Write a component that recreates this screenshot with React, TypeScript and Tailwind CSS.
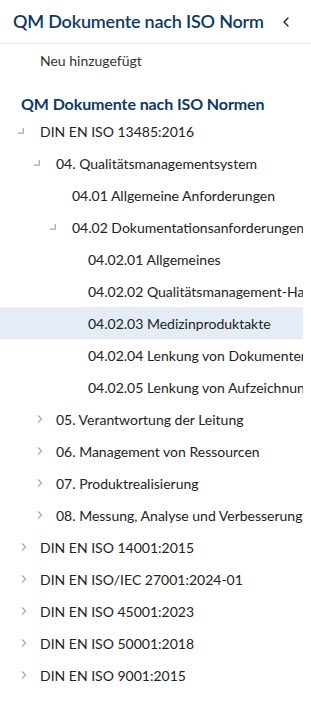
import { ChevronLeft } from "lucide-react";

type Node = {
  label: string;
  level: number;
  state?: "open" | "closed";
  selected?: boolean;
};

const nodes: Node[] = [
  { label: "DIN EN ISO 13485:2016", level: 0, state: "open" },
  { label: "04. Qualitätsmanagementsystem", level: 1, state: "open" },
  { label: "04.01 Allgemeine Anforderungen", level: 2 },
  { label: "04.02 Dokumentationsanforderungen", level: 2, state: "open" },
  { label: "04.02.01 Allgemeines", level: 3 },
  { label: "04.02.02 Qualitätsmanagement-Handbuch", level: 3 },
  { label: "04.02.03 Medizinproduktakte", level: 3, selected: true },
  { label: "04.02.04 Lenkung von Dokumenten", level: 3 },
  { label: "04.02.05 Lenkung von Aufzeichnungen", level: 3 },
  { label: "05. Verantwortung der Leitung", level: 1, state: "closed" },
  { label: "06. Management von Ressourcen", level: 1, state: "closed" },
  { label: "07. Produktrealisierung", level: 1, state: "closed" },
  { label: "08. Messung, Analyse und Verbesserung", level: 1, state: "closed" },
  { label: "DIN EN ISO 14001:2015", level: 0, state: "closed" },
  { label: "DIN EN ISO/IEC 27001:2024-01", level: 0, state: "closed" },
  { label: "DIN EN ISO 45001:2023", level: 0, state: "closed" },
  { label: "DIN EN ISO 50001:2018", level: 0, state: "closed" },
  { label: "DIN EN ISO 9001:2015", level: 0, state: "closed" },
];

const indent = ["pl-[16px]", "pl-[32px]", "pl-[48px]", "pl-[64px]"];

const Toggle = ({ state }: { state?: "open" | "closed" }) => {
  if (state === "open")
    return (
      <svg width="24" height="12" viewBox="0 0 24 12" className="shrink-0">
        <path d="M7.25 3 V8.25 H2" fill="none" stroke="#b8b8b8" strokeWidth="1.5" />
      </svg>
    );
  if (state === "closed")
    return (
      <svg width="24" height="12" viewBox="0 0 24 12" className="shrink-0">
        <path d="M6 2.5 L9.5 6 L6 9.5" fill="none" stroke="#b3b3b3" strokeWidth="1.5" />
      </svg>
    );
  return <span className="w-[24px] shrink-0" />;
};

export default function App() {
  return (
    <div className="w-[311px] h-[701px] bg-white overflow-hidden font-['Lato',sans-serif] text-[#222]">
      {/* Header */}
      <div className="h-[44px] flex items-center justify-between pl-[13px] pr-[17px] border-b border-[#e6e6e6]">
        <h1 className="text-[18px] font-semibold text-[#0e3a66] tracking-[-0.2px]">
          QM Dokumente nach ISO Norm
        </h1>
        <ChevronLeft className="w-[16px] h-[16px] text-[#222]" strokeWidth={2} />
      </div>

      <div className="pl-[40px] pt-[6px] h-[34px] text-[14px] text-[#333]">Neu hinzugefügt</div>

      <h2 className="pl-[21px] pt-[15px] leading-[22px] text-[16px] font-bold text-[#0e3a66] tracking-[-0.1px]">
        QM Dokumente nach ISO Normen
      </h2>

      {/* Tree */}
      <div className="w-[303px] overflow-hidden">
        {nodes.map((n) => (
          <div
            key={n.label}
            className={`h-[32px] flex items-center whitespace-nowrap text-[14px] ${indent[n.level]} ${
              n.selected ? "bg-[#e4ecf5]" : ""
            }`}
          >
            <Toggle state={n.state} />
            <span>{n.label}</span>
          </div>
        ))}
      </div>
    </div>
  );
}
